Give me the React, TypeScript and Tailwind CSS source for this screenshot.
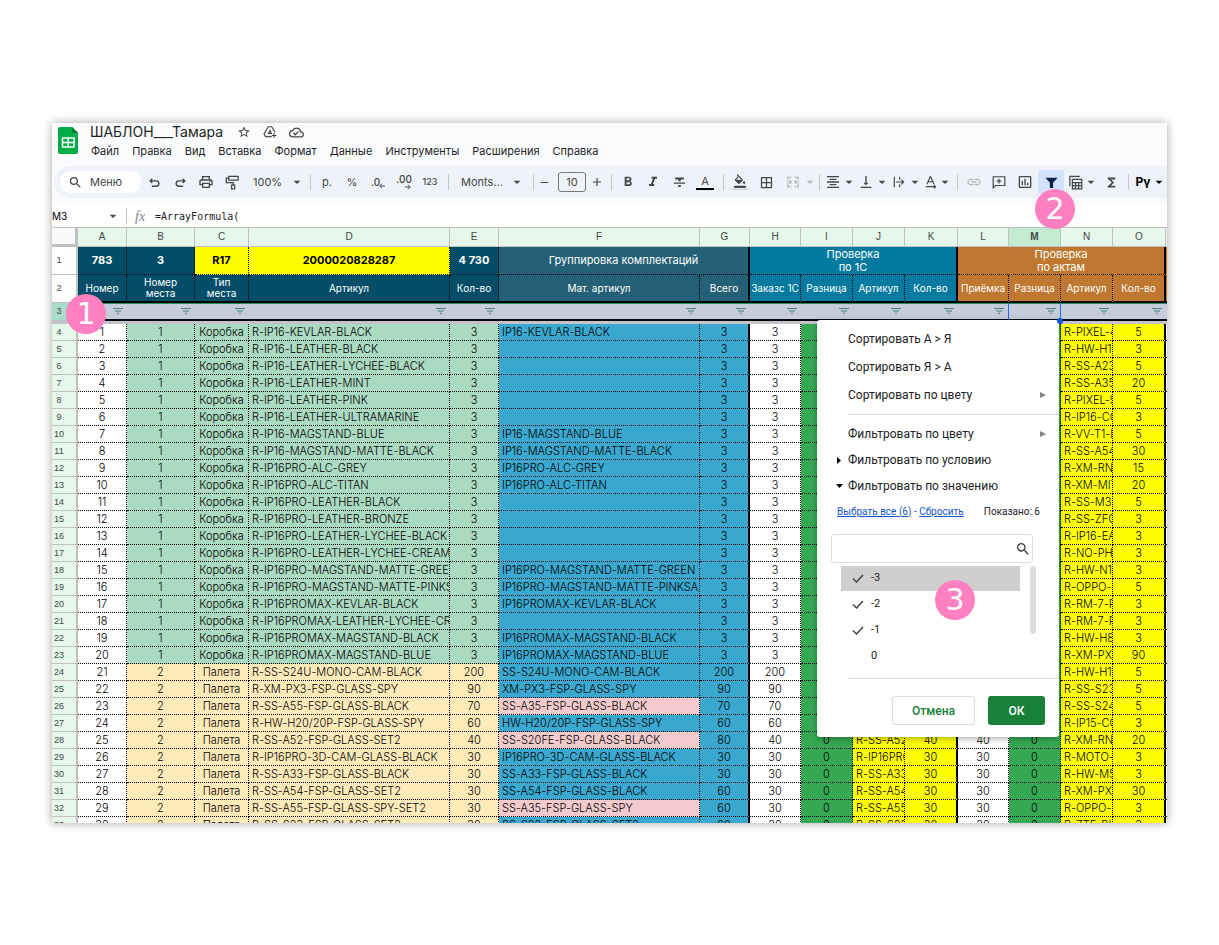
import { useState } from 'react';
import type { ReactNode } from 'react';
import clsx from 'clsx';
import {
    MdAdd,
    MdArrowDropDown,
    MdBorderAll,
    MdFormatAlignCenter,
    MdFormatBold,
    MdFormatColorFill,
    MdFormatItalic,
    MdFormatStrikethrough,
    MdFunctions,
    MdInsertChartOutlined,
    MdLink,
    MdOutlineCloudDone,
    MdOutlinePrint,
    MdRemove,
    MdSearch,
    MdStarBorder,
    MdVerticalAlignBottom,
} from 'react-icons/md';

const menus = ['Файл', 'Правка', 'Вид', 'Вставка', 'Формат', 'Данные', 'Инструменты', 'Расширения', 'Справка'];

const letters = ['A', 'B', 'C', 'D', 'E', 'F', 'G', 'H', 'I', 'J', 'K', 'L', 'M', 'N', 'O'];

const colWidths = [
    'w-[26px]', 'w-[49px]', 'w-[68px]', 'w-[54px]', 'w-[201px]', 'w-[49px]', 'w-[201px]', 'w-[50px]',
    'w-[51px]', 'w-[52px]', 'w-[52px]', 'w-[53px]', 'w-[51px]', 'w-[52px]', 'w-[52px]', 'w-[53px]',
];

// article, qty, grouped article, total
type Item = [string, number, string, number];

const items: Item[] = [
    ['R-IP16-KEVLAR-BLACK', 3, 'IP16-KEVLAR-BLACK', 3],
    ['R-IP16-LEATHER-BLACK', 3, '', 3],
    ['R-IP16-LEATHER-LYCHEE-BLACK', 3, '', 3],
    ['R-IP16-LEATHER-MINT', 3, '', 3],
    ['R-IP16-LEATHER-PINK', 3, '', 3],
    ['R-IP16-LEATHER-ULTRAMARINE', 3, '', 3],
    ['R-IP16-MAGSTAND-BLUE', 3, 'IP16-MAGSTAND-BLUE', 3],
    ['R-IP16-MAGSTAND-MATTE-BLACK', 3, 'IP16-MAGSTAND-MATTE-BLACK', 3],
    ['R-IP16PRO-ALC-GREY', 3, 'IP16PRO-ALC-GREY', 3],
    ['R-IP16PRO-ALC-TITAN', 3, 'IP16PRO-ALC-TITAN', 3],
    ['R-IP16PRO-LEATHER-BLACK', 3, '', 3],
    ['R-IP16PRO-LEATHER-BRONZE', 3, '', 3],
    ['R-IP16PRO-LEATHER-LYCHEE-BLACK', 3, '', 3],
    ['R-IP16PRO-LEATHER-LYCHEE-CREAM', 3, '', 3],
    ['R-IP16PRO-MAGSTAND-MATTE-GREEN', 3, 'IP16PRO-MAGSTAND-MATTE-GREEN', 3],
    ['R-IP16PRO-MAGSTAND-MATTE-PINKSAND', 3, 'IP16PRO-MAGSTAND-MATTE-PINKSAND', 3],
    ['R-IP16PROMAX-KEVLAR-BLACK', 3, 'IP16PROMAX-KEVLAR-BLACK', 3],
    ['R-IP16PROMAX-LEATHER-LYCHEE-CREAM', 3, '', 3],
    ['R-IP16PROMAX-MAGSTAND-BLACK', 3, 'IP16PROMAX-MAGSTAND-BLACK', 3],
    ['R-IP16PROMAX-MAGSTAND-BLUE', 3, 'IP16PROMAX-MAGSTAND-BLUE', 3],
    ['R-SS-S24U-MONO-CAM-BLACK', 200, 'SS-S24U-MONO-CAM-BLACK', 200],
    ['R-XM-PX3-FSP-GLASS-SPY', 90, 'XM-PX3-FSP-GLASS-SPY', 90],
    ['R-SS-A55-FSP-GLASS-BLACK', 70, 'SS-A35-FSP-GLASS-BLACK', 70],
    ['R-HW-H20/20P-FSP-GLASS-SPY', 60, 'HW-H20/20P-FSP-GLASS-SPY', 60],
    ['R-SS-A52-FSP-GLASS-SET2', 40, 'SS-S20FE-FSP-GLASS-BLACK', 80],
    ['R-IP16PRO-3D-CAM-GLASS-BLACK', 30, 'IP16PRO-3D-CAM-GLASS-BLACK', 30],
    ['R-SS-A33-FSP-GLASS-BLACK', 30, 'SS-A33-FSP-GLASS-BLACK', 30],
    ['R-SS-A54-FSP-GLASS-SET2', 30, 'SS-A54-FSP-GLASS-BLACK', 60],
    ['R-SS-A55-FSP-GLASS-SPY-SET2', 30, 'SS-A35-FSP-GLASS-SPY', 60],
    ['R-SS-S23-FSP-GLASS-SET2', 30, 'SS-S23-FSP-GLASS-SET2', 60],
];

const acts: [string, number][] = [
    ['R-PIXEL-4A', 5], ['R-HW-H10', 3], ['R-SS-A23', 5], ['R-SS-A35', 20], ['R-PIXEL-9', 5],
    ['R-IP16-CO', 3], ['R-VV-T1-P', 5], ['R-SS-A54', 30], ['R-XM-RN', 15], ['R-XM-MIT', 20],
    ['R-SS-M30', 5], ['R-SS-ZFO', 3], ['R-IP16-EA', 3], ['R-NO-PH', 3], ['R-HW-N1', 3],
    ['R-OPPO-', 5], ['R-RM-7-P', 3], ['R-RM-7-P', 3], ['R-HW-H8', 3], ['R-XM-PX3', 90],
    ['R-HW-H1', 5], ['R-SS-S23', 5], ['R-SS-S24', 5], ['R-IP15-CO', 3], ['R-XM-RN', 20],
    ['R-MOTO-', 3], ['R-HW-M5', 3], ['R-XM-PX3', 30], ['R-OPPO-', 3], ['R-ZTE-BL', 3],
];

const FIRST_CHECKED = 24;
const pinkRows = [22, 24, 28];

function Svg({ size = 14, children, className }: { size?: number; children: ReactNode; className?: string }) {
    return (
        <svg width={size} height={size} viewBox="0 0 24 24" fill="none" stroke="currentColor" strokeWidth="2" className={className} aria-hidden="true">
            {children}
        </svg>
    );
}

function Tool({ label, w = 'w-[26px]', className, children }: { label: string; w?: string; className?: string; children: ReactNode }) {
    return (
        <button type="button" aria-label={label} className={clsx('flex h-6 shrink-0 items-center justify-center', w, className)}>
            {children}
        </button>
    );
}

function ToolMenu({ label, w = 'w-[33px]', className, children }: { label: string; w?: string; className?: string; children: ReactNode }) {
    return (
        <button type="button" aria-label={label} className={clsx('flex h-6 shrink-0 items-center', w, className)}>
            <span className="flex w-[18px] justify-center">{children}</span>
            <Caret />
        </button>
    );
}

function Caret() {
    return <MdArrowDropDown size={16} className="-mx-px shrink-0" />;
}

function Sep() {
    return (
        <span className="flex w-[10px] shrink-0 justify-center">
            <span className="h-4 w-px bg-[#c7c7c7]" />
        </span>
    );
}

function Header() {
    return (
        <header className="flex gap-3 pl-[6px]">
            <svg width="20" height="27" viewBox="0 0 20 27" className="mt-1 shrink-0" aria-hidden="true">
                <path d="M2 0h12l6 6v19a2 2 0 0 1-2 2H2a2 2 0 0 1-2-2V2a2 2 0 0 1 2-2z" fill="#00ac47" />
                <path d="M14 0l6 6h-6z" fill="#00832d" />
                <path d="M4.500 11h11.500v9H4.500zM4.500 15.500H16M10.250 11v9" fill="none" stroke="#fff" strokeWidth="1.500" />
            </svg>
            <div className="min-w-0 text-[#1f1f1f]">
                <div className="flex h-[18px] items-center">
                    <h1 className="font-['Inter'] text-[14px] leading-[18px]">ШАБЛОН___Тамара</h1>
                    <div className="ml-[14px] flex items-center gap-3 text-[#444746]">
                        <button type="button" aria-label="Пометить"><MdStarBorder size={14} /></button>
                        <button type="button" aria-label="Переместить">
                            <Svg>
                                <path d="M15 20H4.500L1.800 15.500 9 3h6l5.500 9.500M9.500 14.500h5L12 9.500zM19 14v8M15 18h8" />
                            </Svg>
                        </button>
                        <button type="button" aria-label="Сохранено"><MdOutlineCloudDone size={15} /></button>
                    </div>
                </div>
                <nav className="mt-[2px] ml-px flex h-4 items-center gap-[13px] font-['Inter'] text-[11px]">
                    {menus.map((m) => (
                        <button type="button" key={m}>{m}</button>
                    ))}
                </nav>
            </div>
        </header>
    );
}

function Toolbar() {
    return (
        <div className="mt-[7px] ml-[2px] flex h-8 items-center overflow-hidden rounded-l-full bg-[#eff3f9] pl-[6px] font-['Inter'] text-[11px] text-[#444746]">
            <button type="button" className="flex h-[22px] w-[81px] shrink-0 items-center gap-[7px] rounded-full bg-white pl-2">
                <MdSearch size={15} />
                Меню
            </button>
            <Tool label="Отменить" className="pt-px pl-px"><Svg size={13}><path d="M8 5L4 9l4 4M4 9h11a5 5 0 0 1 0 10H7" strokeWidth="2.500" /></Svg></Tool>
            <Tool label="Повторить" className="pt-px pl-px"><Svg size={13}><path d="M16 5l4 4-4 4M20 9H9a5 5 0 0 0 0 10h8" strokeWidth="2.500" /></Svg></Tool>
            <Tool label="Печать"><MdOutlinePrint size={16} /></Tool>
            <Tool label="Копировать форматирование">
                <Svg size={15}><path d="M6 2h15v6H6zM6 5H2v7h11v4M10.500 16h5v6h-5z" /></Svg>
            </Tool>
            <button type="button" className="flex h-6 w-[60px] shrink-0 items-center justify-between pr-px pl-2">
                100%
                <Caret />
            </button>
            <Sep />
            <Tool label="Рубли" w="w-[24px]">р.</Tool>
            <Tool label="Проценты">%</Tool>
            <Tool label="Меньше знаков" className="text-[10px] font-medium">
                <span className="leading-[10px]">.0</span>
                <Svg size={6} className="mt-2 -ml-px"><path d="M24 12H4M12 3l-9 9 9 9" strokeWidth="4" /></Svg>
            </Tool>
            <button type="button" aria-label="Больше знаков" className="flex h-6 w-[26px] shrink-0 flex-col items-center justify-center text-[10px] leading-[9px] font-medium">
                .00
                <Svg size={6} className="ml-2"><path d="M0 12h20M12 3l9 9-9 9" strokeWidth="4" /></Svg>
            </button>
            <Tool label="Другие форматы" className="text-[9px] font-medium">123</Tool>
            <Sep />
            <button type="button" className="flex h-6 w-[75px] shrink-0 items-center justify-between pr-1 pl-2">
                Monts...
                <Caret />
            </button>
            <Sep />
            <div className="flex w-[68px] shrink-0 items-center">
                <button type="button" aria-label="Уменьшить" className="w-[14px]"><MdRemove size={13} /></button>
                <input
                    aria-label="Размер шрифта"
                    defaultValue="10"
                    className="mr-1 ml-[6px] h-5 w-7 rounded-[3px] border border-[#747775] text-center text-[11px]"
                />
                <button type="button" aria-label="Увеличить" className="w-[14px]"><MdAdd size={14} /></button>
            </div>
            <Sep />
            <Tool label="Полужирный" w="w-[24px]"><MdFormatBold size={16} /></Tool>
            <Tool label="Курсив"><MdFormatItalic size={16} /></Tool>
            <Tool label="Зачеркнутый"><MdFormatStrikethrough size={15} /></Tool>
            <Tool label="Цвет текста">
                <span className="flex h-4 w-[18px] items-center justify-center border-b-2 border-black leading-[14px]">A</span>
            </Tool>
            <Sep />
            <Tool label="Цвет заливки" w="w-[24px]">
                <span className="flex w-[18px] justify-center border-b border-[#d0d0d0] pb-px"><MdFormatColorFill size={14} /></span>
            </Tool>
            <Tool label="Границы" w="w-[28px]"><MdBorderAll size={15} /></Tool>
            <Tool label="Объединить" className="text-[#b4b6b9]">
                <Svg><path d="M9 4H3v5M15 4h6v5M9 20H3v-5M15 20h6v-5M1 12h8M6 9l3 3-3 3M23 12h-8M18 9l-3 3 3 3" /></Svg>
            </Tool>
            <span className="flex w-2 justify-center text-[#b4b6b9]"><Caret /></span>
            <Sep />
            <ToolMenu label="Выравнивание"><MdFormatAlignCenter size={16} /></ToolMenu>
            <ToolMenu label="По вертикали"><MdVerticalAlignBottom size={16} /></ToolMenu>
            <ToolMenu label="Перенос"><Svg><path d="M4 3v18M13 3v5M13 16v5M7 12h13M16 8l4 4-4 4" /></Svg></ToolMenu>
            <ToolMenu label="Поворот" w="w-[29px]">
                <Svg><path d="M5 16l5.500-13h1L17 16M7 11.500h8M3 20h17M17 17l3 3-3 3" /></Svg>
            </ToolMenu>
            <Sep />
            <Tool label="Ссылка" w="w-[24px]" className="text-[#b4b6b9]"><MdLink size={16} /></Tool>
            <Tool label="Комментарий"><Svg><path d="M2 22V3h20v15H6zM12 6.500v8M8 10.500h8" /></Svg></Tool>
            <Tool label="Диаграмма"><MdInsertChartOutlined size={16} /></Tool>
            <Tool label="Фильтр" className="rounded-[3px] bg-[#d3e3fd] text-[#041e49]"><Svg size={13}><path d="M3 4h18l-7 8v9h-4v-9z" fill="currentColor" /></Svg></Tool>
            <ToolMenu label="Таблица" className="ml-[2px]">
                <Svg size={15}><path d="M7 7h15v15H7zM7 12h15M7 17h15M12 12v10M17 12v10M3 18V2h16" /></Svg>
            </ToolMenu>
            <Tool label="Функции" w="w-[24px]"><MdFunctions size={15} /></Tool>
            <Sep />
            <ToolMenu label="Поставщик" className="pl-px text-[12px] font-bold text-black">Pγ</ToolMenu>
        </div>
    );
}

function FormulaBar() {
    return (
        <div className="mt-[7px] flex h-[22px] items-center bg-white">
            <input aria-label="Ячейка" defaultValue="M3" className="w-[54px] font-['Inter'] text-[10px] text-black" />
            <MdArrowDropDown size={16} className="-mx-px shrink-0 text-[#444746]" />
            <span className="ml-[6px] h-4 w-px bg-[#c7c7c7]" />
            <span className="ml-2 w-5 font-['Liberation_Serif'] text-[14px] text-[#80868b] italic">fx</span>
            <input
                aria-label="Формула"
                defaultValue="=ArrayFormula("
                className="min-w-0 flex-1 font-['DejaVu_Sans_Mono','Liberation_Mono',monospace] text-[10px] text-[#202124]"
            />
        </div>
    );
}

function FilterIcon() {
    return (
        <svg width="10" height="7" viewBox="0 0 10 7" className="ml-auto" aria-hidden="true">
            <path d="M0 .5h10" stroke="#4b7d78" />
            <path d="M2 3h6" stroke="#6d9494" strokeWidth="1.400" />
            <path d="M4 5.500h2" stroke="#6d9494" strokeWidth="1.400" />
        </svg>
    );
}

function RowHead({ n, className }: { n: number; className?: string }) {
    return (
        <th scope="row" className={clsx("border-r-2 border-b border-[#c0c0c0] pr-[10px] pb-px text-center font-['Liberation_Sans'] text-[9px] leading-[14px] font-normal text-[#444746]", className ?? 'bg-[#e6f7ec]')}>
            {n}
        </th>
    );
}

const cell = 'overflow-hidden whitespace-nowrap border-b border-dotted border-black text-center';
const thin = 'border-r';
const thick = 'border-r-2 [border-right-style:solid]';

function Sheet() {
    const head2: [string, string, string][] = [
        ['Номер', 'bg-[#034d68]', thin],
        ['Номер места', 'bg-[#034d68]', thin],
        ['Тип места', 'bg-[#034d68]', thin],
        ['Артикул', 'bg-[#034d68]', thin],
        ['Кол-во', 'bg-[#034d68]', thin],
        ['Мат. артикул', 'bg-[#246076]', thin],
        ['Всего', 'bg-[#246076]', thick],
        ['Заказс 1С', 'bg-[#057aa0]', thin],
        ['Разница', 'bg-[#057aa0]', thin],
        ['Артикул', 'bg-[#057aa0]', thin],
        ['Кол-во', 'bg-[#057aa0]', thick],
        ['Приёмка', 'bg-[#c07830]', thin],
        ['Разница', 'bg-[#c07830]', thin],
        ['Артикул', 'bg-[#c07830]', thin],
        ['Кол-во', 'bg-[#c07830]', thick],
    ];

    return (
        <table className="w-full table-fixed border-separate border-spacing-0 font-['Inter'] text-[11px] text-black">
            <colgroup>
                {colWidths.map((w, i) => (
                    <col key={i} className={w} />
                ))}
                <col />
            </colgroup>
            <thead>
                <tr className="h-5">
                    <td className="border-t border-r-3 border-b-3 border-[#c0c0c0] bg-[#f8f9fa]" />
                    {letters.map((l) => (
                        <th
                            key={l}
                            scope="col"
                            className={clsx(
                                "border-y border-r border-[#c0c0c0] font-['Liberation_Sans'] text-[10px] leading-[18px] text-[#444746]",
                                l === 'M' ? 'bg-[#c1ecd0] font-bold' : 'bg-[#e6f7ec] font-normal',
                            )}
                        >
                            {l}
                        </th>
                    ))}
                    <td className="border-y border-[#c0c0c0] bg-[#e6f7ec]" />
                </tr>
            </thead>
            <tbody>
                <tr className="h-7 leading-[13px] text-white">
                    <RowHead n={1} className="bg-white" />
                    <td className={clsx(cell, thin, 'bg-[#034d68] font-bold')}>783</td>
                    <td className={clsx(cell, thin, 'bg-[#034d68] font-bold')}>3</td>
                    <td className={clsx(cell, thin, 'bg-[#ffff00] font-bold text-black')}>R17</td>
                    <td className={clsx(cell, thin, 'bg-[#ffff00] font-bold text-black')}>2000020828287</td>
                    <td className={clsx(cell, thin, 'bg-[#034d68] font-bold')}>4 730</td>
                    <td colSpan={2} className={clsx(cell, thick, 'bg-[#246076]')}>Группировка комплектаций</td>
                    <td colSpan={4} className={clsx(cell, thick, 'bg-[#057aa0]')}>Проверка<br />по 1С</td>
                    <td colSpan={4} className={clsx(cell, thick, 'bg-[#c07830]')}>Проверка<br />по актам</td>
                    <td className="bg-[#c07830]" />
                </tr>
                <tr className="h-7 text-[10px] leading-[11px] text-white">
                    <RowHead n={2} className="bg-white" />
                    {head2.map(([t, bg, edge], i) => (
                        <td
                            key={i}
                            className={clsx(
                                'overflow-hidden border-b-2 border-dotted border-black text-center [border-bottom-style:solid]',
                                bg,
                                edge,
                                i === 1 || i === 2 ? 'px-2' : 'whitespace-nowrap',
                            )}
                        >
                            {t}
                        </td>
                    ))}
                    <td className="border-b-2 border-black bg-[#c07830]" />
                </tr>
                <tr className="h-[18px]">
                    <RowHead n={3} className="bg-[#a9dccb]" />
                    {letters.map((l) => (
                        <td
                            key={l}
                            className={clsx(
                                'border-t border-b-2 border-t-[#2a8c5f] border-b-[#05070f] bg-[#c5cddc] pr-1',
                                (l === 'L' || l === 'M') && 'border-r border-r-[#1a73e8]',
                                l === 'M' && 'relative',
                            )}
                        >
                            <FilterIcon />
                            {l === 'M' && <span className="absolute -right-[3px] -bottom-[5px] z-20 size-[6px] rounded-full bg-[#1157d6]" />}
                        </td>
                    ))}
                    <td className="border-t border-b-2 border-t-[#2a8c5f] border-b-[#05070f] bg-[#c5cddc]" />
                </tr>
                <tr className="h-[3px]">
                    <td colSpan={17} className="bg-[#c4c3c8]" />
                </tr>
                {items.map(([art, qty, mat, total], i) => {
                    const box = i < 20 ? 'bg-[#abdac3]' : 'bg-[#ffebb9]';
                    const shown = i >= FIRST_CHECKED;
                    return (
                        <tr key={i} className="h-[17px] leading-[16px] font-light">
                            <RowHead n={i + 4} />
                            <td className={clsx(cell, thin, 'bg-white')}>{i + 1}</td>
                            <td className={clsx(cell, thin, box)}>{i < 20 ? 1 : 2}</td>
                            <td className={clsx(cell, thin, box)}>{i < 20 ? 'Коробка' : 'Палета'}</td>
                            <td className={clsx(cell, thin, box, 'pl-[3px] text-left')}>{art}</td>
                            <td className={clsx(cell, thin, box)}>{qty}</td>
                            <td className={clsx(cell, thin, 'pl-[3px] text-left', pinkRows.includes(i) ? 'bg-[#f4cbcc]' : 'bg-[#3aa8cf]')}>{mat}</td>
                            <td className={clsx(cell, thick, 'bg-[#3aa8cf]')}>{total}</td>
                            <td className={clsx(cell, thin, 'bg-white')}>{qty}</td>
                            <td className={clsx(cell, thin, 'bg-[#35a853]')}>{shown && 0}</td>
                            <td className={clsx(cell, thin, 'bg-[#ffff00] pl-[3px] text-left')}>{shown && art}</td>
                            <td className={clsx(cell, thick, 'bg-[#ffff00]')}>{shown && qty}</td>
                            <td className={clsx(cell, thin, 'bg-white')}>{shown && qty}</td>
                            <td className={clsx(cell, thin, 'bg-[#35a853]')}>{shown && 0}</td>
                            <td className={clsx(cell, thin, 'bg-[#ffff00] pl-[3px] text-left')}>{acts[i][0]}</td>
                            <td className={clsx(cell, thick, 'bg-[#ffff00]')}>{acts[i][1]}</td>
                            <td className={clsx(cell, 'bg-white')} />
                        </tr>
                    );
                })}
            </tbody>
        </table>
    );
}

function FilterMenu() {
    const [checked, setChecked] = useState<Record<string, boolean>>({ '-3': true, '-2': true, '-1': true, '0': false });
    const values = ['-3', '-2', '-1', '0'];

    return (
        <div className="absolute top-[197px] left-[765px] z-10 w-[242px] rounded-[3px] bg-white pt-[5px] pb-3 font-['Roboto'] text-[12px] text-[#202124] shadow-[0_2px_6px_rgba(0,0,0,0.3)]">
            <button type="button" className="flex h-7 w-full items-center pl-[31px]">Сортировать А &gt; Я</button>
            <button type="button" className="flex h-7 w-full items-center pl-[31px]">Сортировать Я &gt; А</button>
            <button type="button" className="flex h-7 w-full items-center justify-between pr-[13px] pl-[31px]">
                Сортировать по цвету
                <svg width="6" height="6" viewBox="0 0 6 6" aria-hidden="true"><path d="M0 0l6 3-6 3z" fill="#80868b" /></svg>
            </button>
            <hr className="mt-[5px] mb-[6px] ml-[30px] border-[#dadce0]" />
            <button type="button" className="flex h-[26px] w-full items-center justify-between pr-[13px] pl-[31px]">
                Фильтровать по цвету
                <svg width="6" height="6" viewBox="0 0 6 6" aria-hidden="true"><path d="M0 0l6 3-6 3z" fill="#80868b" /></svg>
            </button>
            <button type="button" className="flex h-[26px] w-full items-center pl-5">
                <svg width="11" height="7" viewBox="0 0 11 7" aria-hidden="true"><path d="M0 0l4 3.500-4 3.500z" /></svg>
                Фильтровать по условию
            </button>
            <button type="button" className="flex h-[26px] w-full items-center pl-[19px]">
                <svg width="12" height="4" viewBox="0 0 12 4" aria-hidden="true"><path d="M0 0h7L3.500 4z" /></svg>
                Фильтровать по значению
            </button>
            <div className="flex h-6 items-center justify-between pr-[19px] pl-5 text-[10px]">
                <span className="text-[#1155cc]">
                    <a href="#all" className="underline">Выбрать все (6)</a> - <a href="#none" className="underline">Сбросить</a>
                </span>
                <span>Показано: 6</span>
            </div>
            <div className="mt-[11px] mr-[26px] ml-[14px] flex h-[29px] items-center rounded-[3px] border border-[#dadce0] pr-px">
                <input aria-label="Поиск значений" className="h-full min-w-0 flex-1 px-2 outline-none" />
                <MdSearch size={16} className="text-[#3c4043]" />
            </div>
            <div className="mt-[3px] flex justify-between pr-[23px] pl-6 text-[11px]">
                <div className="flex w-[179px] flex-col gap-px">
                    {values.map((v, i) => (
                        <label key={v} className={clsx('flex h-[25px] items-center pl-[11px]', i === 0 && 'bg-[#cfcfcf]')}>
                            <input
                                type="checkbox"
                                checked={checked[v]}
                                onChange={() => setChecked({ ...checked, [v]: !checked[v] })}
                                className="peer size-0 appearance-none"
                            />
                            <svg width="12" height="10" viewBox="0 0 12 10" className="mr-[7px] opacity-0 peer-checked:opacity-100" aria-hidden="true">
                                <path d="M1 4.500l3.500 3.500L11 1" fill="none" stroke="#3c4043" strokeWidth="1.400" />
                            </svg>
                            {v}
                        </label>
                    ))}
                </div>
                <div className="h-[68px] w-[6px] rounded-full bg-[#dadce0]" />
            </div>
            <hr className="mt-[9px] ml-[30px] border-[#dadce0]" />
            <div className="mt-[17px] flex justify-end gap-[13px] pr-[14px] text-[12px] font-medium">
                <button type="button" className="h-[29px] w-[83px] rounded-[3px] border border-[#dadce0] text-[#188038]">Отмена</button>
                <button type="button" className="h-[29px] w-[57px] rounded-[3px] bg-[#188038] text-white">ОК</button>
            </div>
        </div>
    );
}

function Step({ n, className }: { n: number; className: string }) {
    return (
        <span className={clsx("absolute z-30 flex size-10 items-center justify-center rounded-full bg-[#ff80c0] font-['DejaVu_Sans',sans-serif] text-[30px] leading-10 text-white", className)}>
            {n}
        </span>
    );
}

export default function App() {
    return (
        <div className="flex h-screen flex-col bg-white px-[52px] pt-[123px] pb-[122px]">
            <main className="relative min-h-0 flex-1 shadow-[0_0_9px_rgba(0,0,0,0.35)]">
                <div className="h-full overflow-hidden bg-[#f9fbfd]">
                    <Header />
                    <Toolbar />
                    <FormulaBar />
                    <Sheet />
                </div>
                <FilterMenu />
                <Step n={1} className="top-[171px] left-[14px]" />
                <Step n={2} className="top-[66px] left-[983px]" />
                <Step n={3} className="top-[457px] left-[883px]" />
            </main>
        </div>
    );
}
